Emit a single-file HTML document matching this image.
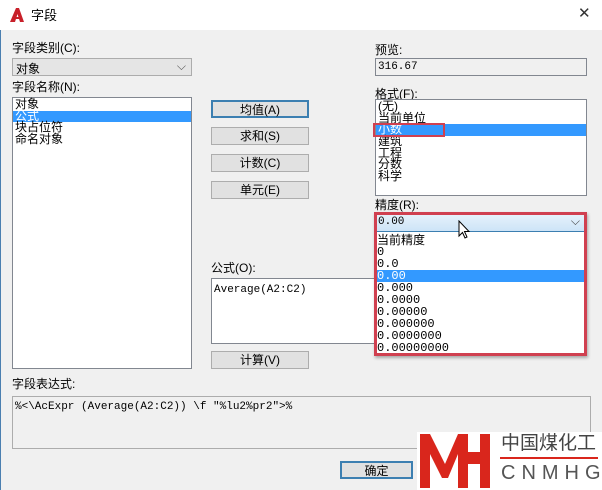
<html><head><style>
body{margin:0;width:602px;height:490px;overflow:hidden;background:#f0f0f0;font-family:"Liberation Sans","Noto Sans CJK SC",sans-serif;font-size:12px;color:#000;position:relative}
.a{position:absolute}
.lbl{position:absolute;font-size:12px;line-height:13px}
.box{position:absolute;background:#fff;border:1px solid #828790;box-sizing:border-box}
.btn{position:absolute;background:#e1e1e1;border:1px solid #adadad;box-sizing:border-box;text-align:center;font-size:12px;line-height:16px}
.it{font-size:12px;line-height:11px;height:11.5px;padding-left:2px;white-space:nowrap}
.dd .it{height:12px;line-height:12px;padding:0}
.sel{background:#3399ff;color:#fff}
.mono{font-family:"Liberation Mono","Noto Sans CJK SC",monospace;font-size:11px}
</style></head><body>
<div class="a" style="left:0;top:0;width:602px;height:30px;background:#fff"></div>
<svg class="a" style="left:9px;top:7px" width="16" height="16" viewBox="0 0 16 16"><path d="M1 15 L7 1 L10 1 L15 15 L11 15 L8.5 7 L6 15Z" fill="#c8202a"/><path d="M5 11 L11 11" stroke="#c8202a" stroke-width="2"/></svg>
<div class="lbl" style="left:31px;top:9px;font-size:13px">字段</div>
<div class="lbl" style="left:578px;top:7px;font-size:15px;color:#333">✕</div>
<div class="a" style="left:0;top:30px;width:1px;height:460px;background:#4a7fb0"></div>

<div class="lbl" style="left:12px;top:42px">字段类别(C):</div>
<div class="box" style="left:12px;top:58px;width:180px;height:18px;background:#e5e5e5;border-color:#acacac"><span style="position:absolute;left:3px;top:1px">对象</span><span style="position:absolute;right:5px;top:0;color:#555">⌵</span></div>
<div class="lbl" style="left:12px;top:81px">字段名称(N):</div>
<div class="box" style="left:12px;top:97px;width:180px;height:272px;padding-top:1px">
<div class="it">对象</div><div class="it sel">公式</div><div class="it">块占位符</div><div class="it">命名对象</div></div>

<div class="btn" style="left:211px;top:100px;width:98px;height:18px;border:2px solid #3c7fb1">均值(A)</div>
<div class="btn" style="left:211px;top:127px;width:98px;height:18px">求和(S)</div>
<div class="btn" style="left:211px;top:154px;width:98px;height:18px">计数(C)</div>
<div class="btn" style="left:211px;top:181px;width:98px;height:18px">单元(E)</div>
<div class="lbl" style="left:211px;top:262px">公式(O):</div>
<div class="box" style="left:211px;top:278px;width:170px;height:66px"><span class="mono" style="position:absolute;left:2px;top:5px">Average(A2:C2)</span></div>
<div class="btn" style="left:211px;top:351px;width:98px;height:18px">计算(V)</div>

<div class="lbl" style="left:375px;top:44px">预览:</div>
<div class="box" style="left:375px;top:58px;width:212px;height:18px;background:#f0f0f0"><span class="mono" style="position:absolute;left:2px;top:2px">316.67</span></div>
<div class="lbl" style="left:375px;top:88px">格式(F):</div>
<div class="box" style="left:375px;top:99px;width:212px;height:97px;padding-top:1px">
<div class="it">(无)</div><div class="it">当前单位</div><div class="it sel" style="height:12px">小数</div><div class="it">建筑</div><div class="it">工程</div><div class="it">分数</div><div class="it">科学</div></div>
<div class="a" style="left:373px;top:123px;width:72px;height:14px;border:2px solid #d04050;box-sizing:border-box"></div>
<div class="lbl" style="left:375px;top:199px">精度(R):</div>

<div class="a" style="left:374px;top:212px;width:213px;height:144px;border:3px solid #d04050;box-sizing:border-box;box-shadow:1px 2px 3px rgba(0,0,0,.3)"></div>
<div class="a" style="left:377px;top:215px;width:207px;height:17px;background:linear-gradient(#e5f1fb,#cde4f7);border-bottom:1px solid #3c7fb1;box-sizing:border-box"><span class="mono" style="position:absolute;left:1px;top:1px">0.00</span><span style="position:absolute;right:4px;top:-1px;color:#444">⌵</span></div>
<div class="a mono dd" style="left:377px;top:232px;width:207px;height:121px;background:#fff;padding-top:2px;box-sizing:border-box">
<div class="it" style="font-family:'Liberation Sans','Noto Sans CJK SC',sans-serif;font-size:12px">当前精度</div><div class="it">0</div><div class="it">0.0</div><div class="it sel">0.00</div><div class="it">0.000</div><div class="it">0.0000</div><div class="it">0.00000</div><div class="it">0.000000</div><div class="it">0.0000000</div><div class="it">0.00000000</div></div>
<svg class="a" style="left:458px;top:220px" width="14" height="20" viewBox="0 0 14 20"><path d="M1 1 L1 16 L4.5 12.5 L7 18 L9 17 L6.5 11.5 L11 11.5Z" fill="#fff" stroke="#000" stroke-width="1"/></svg>

<div class="lbl" style="left:12px;top:378px">字段表达式:</div>
<div class="box" style="left:12px;top:396px;width:579px;height:53px;background:#f0f0f0;border-color:#acacac"><span class="mono" style="position:absolute;left:2px;top:4px">%&lt;\AcExpr (Average(A2:C2)) \f "%lu2%pr2"&gt;%</span></div>
<div class="btn" style="left:340px;top:461px;width:73px;height:18px;border:2px solid #3c7fb1">确定</div>

<div class="a" style="left:417px;top:432px;width:185px;height:58px;background:#fff"></div>
<svg class="a" style="left:417px;top:432px" width="80" height="58" viewBox="0 0 80 58"><path d="M3 2 H13 L28 32 L41 2 H51 V56 H41 V22 L31 46 H25 L13 22 V56 H3Z M51 20 H63 V2 H73 V56 H63 V32 H51Z" fill="#d9261c"/></svg>
<div class="a" style="left:501px;top:433px;font-size:19px;line-height:22px;color:#444">中国煤化工</div>
<div class="a" style="left:500px;top:457px;width:98px;height:2px;background:#d9261c"></div>
<div class="a" style="left:501px;top:461px;font-size:20px;line-height:24px;color:#555;letter-spacing:6px">CNMHG</div>
</body></html>
